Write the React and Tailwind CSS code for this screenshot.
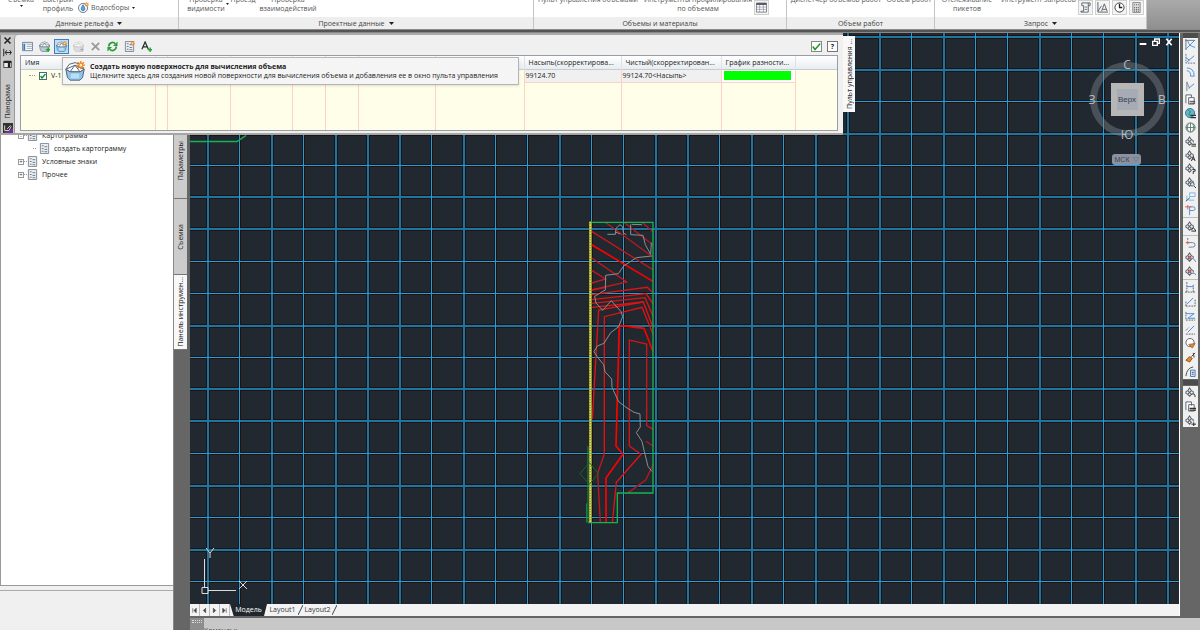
import clsx from "clsx";

// ── Grid ─────────────────────────────────────────────────────────────────────
const V_SHARP = [239, 303, 431, 495, 527, 591, 623, 719, 783, 911, 975, 1007, 1071, 1103];
const V_WIDE = [207, 271, 335, 367, 399, 463, 559, 655, 687, 751, 815, 847, 879, 943, 1039, 1135, 1167];
const H_SHARP = [101, 165, 261, 293, 357, 453, 517, 581];
const H_WIDE = [36, 69, 133, 196, 228, 325, 388, 420, 485, 549];

function Grid() {
  return (
    <g shapeRendering="crispEdges">
      <g fill="#1b1315">
        {V_SHARP.map((x) => <rect key={x} x={x - 1} y="33" width="3" height="571" />)}
        {V_WIDE.map((x) => <rect key={x} x={x - 1} y="33" width="4" height="571" />)}
        {H_SHARP.map((y) => <rect key={y} x="190" y={y - 1} width="990" height="3" />)}
        {H_WIDE.map((y) => <rect key={y} x="190" y={y - 1} width="990" height="4" />)}
      </g>
      <g fill="#1b76a0">
        {V_WIDE.map((x) => <rect key={x} x={x} y="33" width="2" height="571" />)}
        {H_WIDE.map((y) => <rect key={y} x="190" y={y} width="990" height="2" />)}
      </g>
      <g fill="#22a0dc">
        {V_SHARP.map((x) => <rect key={x} x={x} y="33" width="1" height="571" />)}
        {H_SHARP.map((y) => <rect key={y} x="190" y={y} width="990" height="1" />)}
      </g>
    </g>
  );
}

// Terrain surface: red contours, green border, grey ground line
function Surface() {
  return (
    <g transform="translate(560 200) scale(.3333)" fill="none">
      <g stroke="#e31212" strokeWidth="4">
        <path d="M136 67 280 172M192 67 280 136M246 67 280 96" stroke="#b8181d" />
        <path d="M95 94 280 210M95 174 200 246 95 270M95 211 137 237 95 249" stroke="#c8171b" />
        <path d="M95 134 280 245" strokeWidth="5" stroke="#f00" />
        <path d="M95 270 137 262M95 284 262 262 280 280M95 299 258 281 280 312M95 310 255 293 280 350M95 322 250 306 280 385" />
        <path d="M97 657 116 330 248 306M133 762V350L246 322 280 405" />
        <path d="M133 762 113 820 121 968" stroke="#c8171b" />
        <path d="M280 457 252 385 178 376 168 738 189 763 138 834V968" stroke="#f00" strokeWidth="5" />
        <path d="M208 738V420L260 432V677L280 688" stroke="#c8171b" />
        <path d="M208 738 243 763 169 847 157 968" />
        <path d="M258 724 280 739M280 793 257 840 205 878" stroke="#b8181d" />
      </g>
      <path
        d="M142 103H166L168 85 180 74 188 80 190 99 199 104M166 96 181 102M212 73V104L249 106 256 134 272 163 274 128M246 74 215 73M275 168 229 173 191 198 175 221 137 226 136 270 104 289 108 309 128 331 154 302 183 335 188 350 176 380 152 398 132 430 112 438 102 455 113 472 131 494 135 515 155 537 156 562 176 605 198 622 222 637 240 642 241 681 229 698 246 724 253 755 264 799 276 815"
        stroke="#8b8f93"
        strokeWidth="3"
      />
      <path d="M88 67H279V879H172V968H84" stroke="#13b553" strokeWidth="4" />
      <path d="M84 739V968M80 910V968" stroke="#159447" strokeWidth="3" />
      <path d="M91 65V968" stroke="#a8981f" strokeWidth="8" />
      <path d="M91 65V968" stroke="#e9e13a" strokeWidth="4" strokeDasharray="5 3" />
      <path d="M88 788 115 821 88 853 60 821Z" stroke="#1c641f" strokeWidth="3" />
    </g>
  );
}

function ViewCube() {
  return (
    <g fontFamily="'Open Sans', sans-serif" textAnchor="middle">
      <circle cx="1127.500" cy="99.500" r="34" fill="none" stroke="#8d9299" strokeOpacity=".38" strokeWidth="7" />
      <rect x="1111" y="83" width="33" height="33" fill="#b6b6b6" />
      <rect x="1117" y="89" width="21" height="21" fill="#a7acb4" />
      <text x="1127" y="102" fontSize="8" fontFamily="'Liberation Sans', sans-serif" fill="#33404d">Верх</text>
      <g fontSize="12" fill="#b8bbbe">
        <text x="1127" y="69">С</text>
        <text x="1092" y="104">З</text>
        <text x="1162" y="104">В</text>
        <text x="1127" y="139">Ю</text>
      </g>
      <rect x="1112" y="154" width="29" height="11" rx="3" fill="#8c919f" />
      <text x="1122" y="162" fontSize="7" fontFamily="'Liberation Sans', sans-serif" fill="#3e4655">МСК</text>
      <path d="M1133 157.500h6l-3 4z" fill="none" stroke="#737a8b" strokeWidth=".8" />
    </g>
  );
}

function Drawing() {
  return (
    <svg className="block h-full w-full" role="img" aria-label="Модель">
      <g transform="translate(-190 -33)">
        <Grid />
        <path d="M190 141.500H237L246 135.500" fill="none" stroke="#13b553" strokeWidth="1.500" />
        <Surface />
        <ViewCube />
        {/* UCS icon */}
        <g fill="none" stroke="#d9dcdf">
          <path d="M204.500 559V587M208 590.500H236M202 587.500h6v6h-6z" />
          <path d="M206 548l4 5 4-5M210 553v5M239 581l8 8M247 581l-8 8" />
        </g>
      </g>
    </svg>
  );
}

// ── Icons ────────────────────────────────────────────────────────────────────
function Icon({ size = 12, children }) {
  return (
    <svg width={size} height={size} viewBox="0 0 12 12" fill="none" stroke="#555e69" className="block shrink-0">
      {children}
    </svg>
  );
}

const Spark = ({ x = 9.5, y = 2.5 }) => (
  <g>
    <path
      d={`M${x - 2.5} ${y}h5M${x} ${y - 2.5}v5M${x - 1.8} ${y - 1.8}l3.600 3.600M${x + 1.8} ${y - 1.8}l-3.600 3.600`}
      stroke="#ef7d17"
      strokeWidth=".8"
    />
    <circle cx={x} cy={y} r="1.1" fill="#fff3c4" stroke="#ef7d17" strokeWidth=".5" />
  </g>
);

const Basket = ({ gray, blue }) => (
  <g stroke={gray ? "#bdbdbd" : "#55677a"} strokeWidth=".6">
    <path d="M.5 5 2.500 2 6 1 9.500 2 11.500 5 9 6.500H3ZM.5 5 6 2.500 11.500 5M6 2.500 3 6.500M6 2.500 9 6.500" fill="#fff" />
    <path d="M.5 5 1.500 10 3 11.500H9L10.500 10 11.500 5 9 6.500H3Z" fill={gray ? "#ddd" : blue ? "#8cc4ea" : "#b9cad6"} />
    {blue && <path d="M3.500 7.500h5L8.500 10.500h-5z" fill="#b9def5" stroke="none" />}
  </g>
);

const Plus = () => <path d="M10 7v5M7.500 9.500h5" stroke="#22a832" strokeWidth="1.600" />;

const Page = () => (
  <>
    <path d="M1.500 .5h9v11h-9z" fill="#e9edf1" stroke="#7d8791" />
    <path d="M3 3h2M6 4h3M3 6h2M6 7h3M3 9h2M6 9.500h3" stroke="#6a7682" />
  </>
);

const Node = () => (
  <path d="M5 1 7 4 5 6 3 4ZM5 6 7 8 5 10 3 8ZM1 5l2-1M9 5 7 4M1 7l2 1M1 5v2M9 5v2" strokeWidth="1.100" />
);

const PALETTE_TOOLS = [
  ["Вид", <><path d="M.5 1.500h11v9H.5z" fill="#fff" stroke="#6683a5" /><path d="M2.500 3v7" stroke="#4173b0" strokeWidth="2" /><path d="M5 4h6M5 6h6M5 8h6M.5 2h11" stroke="#8796a8" strokeWidth=".8" /></>],
  ["Добавить поверхность", <><Basket /><Plus /></>],
  ["Создать поверхность", <><Basket blue /><Spark /></>],
  ["Добавить область", <><Basket gray /><path d="M10 7v5M7.500 9.500h5" stroke="#aaa" /></>],
  ["Удалить", <path d="M2 2l8 8M10 2l-8 8" stroke="#9b9b9b" strokeWidth="2" />],
  ["Обновить", <><path d="M2 6a4 4 0 0 1 7-3M10 6a4 4 0 0 1-7 3" stroke="#2f9d3c" strokeWidth="2" /><path d="M11.500.5v5h-5zM.5 11.500v-5h5z" fill="#2f9d3c" stroke="none" /></>],
  ["Отчет", <><Page /><Spark x={9.5} y={2.5} /></>],
  ["Текст", <><path d="M1 9 4.500 1 8 9M2.500 6.500h4" stroke="#222b33" strokeWidth="1.300" /><Plus /></>],
];

const SIDE_TOOLS = [
  ["h-[180px]", [
    <><path d="M1 0v12M0 1.500h11" stroke="#68727c" /><path d="M1 11 10 2M3 2q1 6 8 7" stroke="#4a8ed8" /></>,
    <><path d="M1 1v10h10" stroke="#68727c" strokeDasharray="2 1" /><path d="M2 10 10 3M1 5l4 3" stroke="#3d86da" /></>,
    <path d="M2 1q8 0 8 9H6Q7 5 2 4" stroke="#4a8ed8" />,
    <><path d="M2 1v10M2 1l3 7" stroke="#7a838d" /><path d="M4 8 10 3" stroke="#3d86da" /></>,
    <><path d="M1 10V1h6v3M4 4h6v7H4z" fill="#fff" /><path d="M5 8h6M5 10h6" stroke="#333" /></>,
    <><circle cx="5.500" cy="5.500" r="5" fill="#5fb7cf" stroke="#3c6f8d" /><path d="M3 2l3 2-2 3 3 2" stroke="#318445" /><path d="M6 8h6M6 10.500h6" stroke="#333" strokeWidth="1.500" /></>,
    <><circle cx="6" cy="6" r="5" fill="#fff" /><path d="M1 6h10M6 1v10M3.500 2q-2 4 0 8M8.500 2q2 4 0 8" stroke="#56816b" /></>,
    <><Node /><path d="M7 9h5M7 11h5" stroke="#222" /></>,
    <><Node /><path d="M7 12l2-5 2 5M8 10h2" stroke="#222" /></>,
    <><Node /><path d="M8 7h3v2H9v3" stroke="#222" /></>,
    <><Node /><circle cx="8" cy="8" r="2" fill="#cfe5e3" /><path d="M10 10l2 2" stroke="#222" /></>,
    <><path d="M5 6V2h6v4H5M1 11l5-5M2 5v5M4 10h6" stroke="#7fb2e8" /><path d="M1 11 5 8" /></>,
    <><path d="M5 2h4q2 0 2 2t-2 2H5M5 2v9" stroke="#4d8dd2" /><path d="M0 2h7M3 0v5" stroke="#db5b57" /></>,
  ]],
  ["h-[18px]", [<><Node /><path d="M7 10 9 7l3 4H7" stroke="#222" /></>]],
  ["h-[44px]", [
    <><path d="M1 5h7q3 0 3 2.500T8 10H4" stroke="#5d7fab" /><path d="M3 3v4M1 5h4" stroke="#e35b55" /><path d="M3 0v2" /></>,
    <><Node /><path d="M5 8q4-3 7 3" stroke="#5d7fab" /><path d="M3 6h4M5 4v4" stroke="#e35b55" /></>,
    <><Node /><path d="M7 8q4-1 5 2" stroke="#5d7fab" /><path d="M3 6h4M5 4v4" stroke="#e35b55" /></>,
  ]],
  ["h-[99px]", [
    <><path d="M2 0v11M9 3v8" stroke="#555e69" strokeDasharray="2 1" /><path d="M2 5h7" stroke="#3d86da" /><path d="M0 11h12" strokeDasharray="2 1" /></>,
    <><path d="M1 11V5M1 11h10V4" strokeDasharray="2 1" /><path d="M2 9 9 2" stroke="#3d86da" /></>,
    <><path d="M1 2v9h10" strokeDasharray="2 1" /><path d="M1 4h9L3 9h8" stroke="#3d86da" /></>,
    <><path d="M1 11h10M1 7l3-3" strokeDasharray="2 1" /><path d="M3 9 10 2" stroke="#3d86da" /></>,
    <><circle cx="5.500" cy="5" r="4.500" fill="#fff" /><path d="M4 7l7-1-3 5z" fill="#e48a2a" stroke="#8f4f16" strokeWidth=".7" /></>,
    <><path d="M1 9l4-4 3 2-3 4z" fill="#e48a2a" stroke="#8f4f16" /><path d="M7 5l4-4M9 1l1 5" stroke="#333" /></>,
    <><path d="M1 11Q2 2 9 1" stroke="#444" /><path d="M6 4.500h5v7H6z" fill="#cfe2f7" stroke="#4b78ab" /><path d="M7.500 7h2M7.500 9h2" /></>,
  ]],
];

const SIDE_TOOLS_EXTRA = [
  <><Node /><path d="M7 8q4-2 4 3" stroke="#222" /></>,
  <><path d="M1 10V1h6v4M4 4h6v7H4z" fill="#fff" /><path d="M5 8h7M5 10h7" stroke="#333" strokeWidth="1.300" /></>,
  <><Node /><path d="M7 10h5M9.500 8v4" stroke="#222" /></>,
];

// ── Ribbon ───────────────────────────────────────────────────────────────────
function Arrow({ small, className }) {
  return (
    <svg width={small ? 3 : 5} height={small ? 2 : 3} viewBox="0 0 5 3" className={clsx("block shrink-0", className)}>
      <path d="M0 0h5L2.500 3z" fill="#222" />
    </svg>
  );
}

function RibbonGroup({ title, arrow, className, children }) {
  return (
    <section className={clsx("flex shrink-0 flex-col border-r border-[#c4c4c4] bg-white", className)}>
      <div className="flex h-[17px] items-end overflow-hidden pb-1">{children}</div>
      <h2 className="flex h-3 items-center justify-center gap-1 bg-[#eeeeee] text-[#444]">
        {title}
        {arrow && <Arrow />}
      </h2>
    </section>
  );
}

function RibbonButton({ top, bottom, className }) {
  return (
    <button className={clsx("flex h-[18px] shrink-0 flex-col items-center whitespace-nowrap leading-[9px]", className)}>
      <span>{top}</span>
      <span>{bottom}</span>
    </button>
  );
}

function RibbonIcon({ label, children }) {
  return (
    <button aria-label={label} className="-mb-0.5 flex size-[15px] shrink-0 items-center justify-center border border-[#d0d0d0] bg-[#f4f4f4]">
      <Icon size={11}>{children}</Icon>
    </button>
  );
}

function Ribbon() {
  return (
    <header className="flex h-[29px] shrink-0 overflow-hidden bg-gradient-to-b from-[#aaaaaa] to-[#8f8f8f] text-[7px] leading-[9px] text-[#555]">
      <RibbonGroup title="Данные рельефа" arrow className="w-[179px]">
        <RibbonButton top="Съемка" bottom={<Arrow small className="mt-px" />} className="w-[42px]" />
        <RibbonButton top="Быстрый" bottom="профиль" className="w-8" />
        <button className="ml-1 flex h-[11px] items-center gap-0.5 whitespace-nowrap">
          <Icon size={11}>
            <circle cx="5.500" cy="6.500" r="5" fill="#eef4fa" stroke="#66788a" />
            <path d="M5.500 3q4 6 0 6.500-4-.5 0-6.500z" fill="#5ea3df" stroke="#31679f" strokeWidth=".7" />
            <Spark />
          </Icon>
          <span>Водосборы</span>
          <Arrow small className="ml-px" />
        </button>
      </RibbonGroup>
      <RibbonGroup title="Проектные данные" arrow className="w-[355px]">
        <RibbonButton top="Проверка" bottom="видимости" className="ml-2 w-[38px]" />
        <Arrow small className="mb-2 ml-px" />
        <RibbonButton top="Проезд" className="w-7" />
        <RibbonButton top="Проверка" bottom="взаимодействий" className="ml-0.5 w-[58px]" />
      </RibbonGroup>
      <RibbonGroup title="Объемы и материалы" className="w-[253px]">
        <RibbonButton top="Пульт управления объемами" className="w-[108px]" />
        <RibbonButton top="Инструменты профилирования" bottom="по объемам" className="w-[112px]" />
        <RibbonIcon label="Таблица объемов">
          <path d="M.5 1.500h11v9.500H.5z" fill="#fff" strokeWidth=".8" />
          <path d="M.5 2h11" strokeWidth="2.500" />
          <path d="M1 5.500h10M1 8h10M4 3v8M8 3v8" strokeWidth=".5" />
        </RibbonIcon>
      </RibbonGroup>
      <RibbonGroup title="Объем работ" className="w-[148px]">
        <RibbonButton top="Диспетчер объемов работ" className="w-[98px]" />
        <RibbonButton top="Объем работ" className="w-[48px]" />
      </RibbonGroup>
      <RibbonGroup title="Запрос" arrow className="w-[212px]">
        <RibbonButton top="Отслеживание" bottom="пикетов" className="w-[64px]" />
        <RibbonButton top="Инструмент запросов" className="w-[79px]" />
        <div className="flex gap-0.5">
          <RibbonIcon label="Список">
            <path d="M2 1h7v3h2V1H9M4 4v6H1v1h8V4M2 1v3h2M5 5.500h3M5 8h3" fill="#fff" />
          </RibbonIcon>
          <RibbonIcon label="Угол">
            <path d="M1 0v11h11M1 10 5 4M5 10 8 2l3 8M6 8h4" />
          </RibbonIcon>
          <RibbonIcon label="Время">
            <circle cx="6" cy="6" r="5" fill="#fff" stroke="#333" />
            <path d="M6 2v4h3" stroke="#222" strokeWidth="1.400" />
          </RibbonIcon>
          <RibbonIcon label="Калькулятор">
            <path d="M2 .5h8v11H2z" fill="#ddd" stroke="#888" />
            <path d="M3.500 3h5M3.500 6h5M3.500 8h5M3.500 10h5" strokeDasharray="1 1" strokeWidth="1.300" />
          </RibbonIcon>
        </div>
      </RibbonGroup>
    </header>
  );
}

// ── Tool palette on the left ─────────────────────────────────────────────────
function TreeItem({ label, child, sign }) {
  return (
    <li className={clsx("flex h-[13px] items-center", child ? "pl-[32px]" : "pl-[17px]")}>
      {sign && (
        <button aria-label={label} className="flex size-[6px] items-center justify-center border border-[#999] bg-white text-[6px] leading-[6px] text-[#335]">
          {sign}
        </button>
      )}
      <span className="w-[3px] border-t border-dotted border-[#999]" />
      <span className={child ? "ml-[3px]" : ""}><Icon size={11}><Page /></Icon></span>
      <span className={child ? "ml-1" : "ml-[4px]"}>{label}</span>
    </li>
  );
}

function SideTab({ label, active, className }) {
  return (
    <button
      className={clsx(
        "flex w-[13px] shrink-0 items-center justify-center border-b border-[#777]",
        active ? "bg-[#f8f8f8]" : "bg-[#cccccc]",
        className
      )}
    >
      <span className="rotate-180 whitespace-nowrap [writing-mode:vertical-rl]">{label}</span>
    </button>
  );
}

function ToolPalette() {
  return (
    <aside className="flex w-[187px] shrink-0 text-[7px] leading-[9px] text-[#222]">
      <div className="flex flex-1 flex-col border-r border-[#888] bg-[#f0f0f0]">
        <ul className="flex-1 border-b border-l border-[#999] bg-white pt-[96px]">
          <TreeItem label="Картограмма" sign="-" />
          <TreeItem label="создать картограмму" child />
          <TreeItem label="Условные знаки" sign="+" />
          <TreeItem label="Прочее" sign="+" />
        </ul>
        <div className="mt-1 h-10 border-t border-[#aaa]" />
      </div>
      <div className="flex flex-col">
        <SideTab label="Параметры" className="h-[166px] pt-[90px]" />
        <SideTab label="Съемка" className="h-[76px]" />
        <SideTab label="Панель инструмен..." active className="h-[75px]" />
      </div>
    </aside>
  );
}

// ── Volumes dashboard ────────────────────────────────────────────────────────
const COLUMNS = [
  ["w-[134px]", "Имя"],
  ["w-[12px]", ""],
  ["w-[63px]", ""],
  ["w-[62px]", ""],
  ["w-[33px]", ""],
  ["w-[33px]", ""],
  ["w-[77px]", ""],
  ["w-[89px]", ""],
  ["w-[97px]", "Насыпь(скорректирова..."],
  ["w-[100px]", "Чистый(скорректирован..."],
  ["w-[74px]", "График разности..."],
];

function Dashboard() {
  return (
    <div className="absolute top-0 left-0 flex h-[102px] w-[843px] border-y-2 border-t-[#aaaaaa] border-b-[#a5a5a2] bg-[#c9c9c9] text-[7px] leading-[9px] text-[#222]">
      <div className="flex w-[14px] shrink-0 flex-col items-center gap-[3px] border-l border-[#888] pt-px">
        <button aria-label="Закрыть"><Icon size={9}><path d="M2 2l8 8M10 2l-8 8" stroke="#222" strokeWidth="2" /></Icon></button>
        <button aria-label="Скрыть"><Icon size={9}><path d="M1 1v10M3 6h8M5 3 3 6l2 3M9 3l2 3-2 3" stroke="#222" strokeWidth="1.300" /></Icon></button>
        <button aria-label="Свойства"><Icon size={9}><path d="M1 2h10v8H1z" fill="#eee" stroke="#222" /><path d="M1 2.500h10M8 2v8" stroke="#222" strokeWidth="3" /></Icon></button>
        <h2 className="mt-3 rotate-180 whitespace-nowrap [writing-mode:vertical-rl]">Панорама</h2>
        <span className="mt-auto">
          <Icon size={10}><path d="M0 0h12v12H0z" fill="#333" stroke="none" /><path d="M0 12h12V6z" fill="#713393" stroke="none" /><path d="M2 3v6h5l3-5M5 7l4-4" stroke="#eee" /></Icon>
        </span>
      </div>
      <div className="flex min-w-0 flex-1 flex-col rounded-tl border-l border-[#999] bg-[#f0f0f0] px-[5px] pt-[3px]">
        <div className="flex h-[17px] shrink-0 items-center gap-0.5">
          {PALETTE_TOOLS.map(([label, icon], i) => (
            <button
              key={label}
              aria-label={label}
              className={clsx("flex h-[15px] w-[15px] items-center justify-center", i === 2 && "border border-[#3c82bd] bg-[#bfdef5]")}
            >
              <Icon size={11}>{icon}</Icon>
            </button>
          ))}
          <button aria-label="Применить" className="ml-auto flex size-[11px] items-center justify-center border border-[#888] bg-white">
            <Icon size={9}><path d="M1 6l3 4 7-8" stroke="#189a25" strokeWidth="2" /></Icon>
          </button>
          <button aria-label="Справка" className="ml-[3px] size-[11px] border border-[#777] bg-white font-bold">?</button>
        </div>
        <div className="h-[76px] overflow-hidden border border-[#9a9da5] bg-[#ffffe9]">
          <table className="h-full w-full table-fixed border-collapse text-left">
            <thead className="bg-gradient-to-b from-white to-[#e9edf0]">
              <tr className="h-[13px] border-b border-[#c5ccd5]">
                {COLUMNS.map(([width, label], i) => (
                  <th key={i} className={clsx("overflow-hidden border-r border-[#e0e3e6] p-0 pl-1 font-normal whitespace-nowrap", width)}>{label}</th>
                ))}
                <th />
              </tr>
            </thead>
            <tbody className="[&_td]:border-r [&_td]:border-[#ffd0c6] [&_td]:p-0">
              <tr className="h-[13px]">
                <td>
                  <label className="flex items-center gap-1 pl-2">
                    <span className="w-[6px] border-t border-dotted border-[#999]" />
                    <span className="grid size-[8px] place-items-center border border-[#51697a] bg-white">
                      <input type="checkbox" defaultChecked className="peer col-start-1 row-start-1 size-[6px] appearance-none" />
                      <span className="pointer-events-none col-start-1 row-start-1 hidden peer-checked:block">
                        <Icon size={6}><path d="M1 6l3 4 7-8" stroke="#119b1d" strokeWidth="3" /></Icon>
                      </span>
                    </span>
                    V-1
                  </label>
                </td>
                {COLUMNS.slice(1, 8).map((_, i) => <td key={i} />)}
                <td className="border-b border-b-[#a9b4bf] bg-[#f0f0f0]"><span className="pl-px">99124.70</span></td>
                <td className="border-b border-b-[#a9b4bf] bg-[#f0f0f0]"><span className="pl-px">99124.70&lt;Насыпь&gt;</span></td>
                <td className="border-b border-b-[#a9b4bf] bg-white"><div className="mr-1 ml-0.5 h-[9px] bg-[#00ff00]" /></td>
                <td className="!border-r-0" />
              </tr>
              <tr>
                {COLUMNS.map((_, i) => <td key={i} />)}
                <td className="!border-r-0" />
              </tr>
            </tbody>
          </table>
        </div>
      </div>
      <button className="absolute top-px left-full flex h-[76px] w-3 items-center justify-center bg-[#f8f8f8]">
        <span className="rotate-180 whitespace-nowrap [writing-mode:vertical-rl]">Пульт управления ...</span>
      </button>

      <div role="tooltip" className="absolute top-[22px] left-[62px] flex h-[28px] w-[457px] items-center gap-[5px] border border-[#b5b5b5] bg-[#f5f5f6] pl-[2px] shadow">
        <Icon size={20}>
          <Basket blue />
          <Spark />
        </Icon>
        <div className="whitespace-nowrap">
          <p className="font-bold text-[#222]">Создать новую поверхность для вычисления объема</p>
          <p>Щелкните здесь для создания новой поверхности для вычисления объема и добавления ее в окно пульта управления</p>
        </div>
      </div>
    </div>
  );
}

// ── Drawing window ───────────────────────────────────────────────────────────
function Slash() {
  return (
    <svg width="5" height="12" viewBox="0 0 5 12" className="block"><path d="M0 11 5 1" stroke="#444" /></svg>
  );
}

function LayoutTabs() {
  return (
    <nav className="flex h-3 shrink-0 items-stretch bg-[#f3f3f3] text-[7px] leading-3 text-[#333]">
      {["M3 2v8M9 2v8L5 6z", "M8 2v8L4 6z", "M4 2v8l4-4z", "M9 2v8M3 2v8l4-4z"].map((d) => (
        <button key={d} aria-label="Лист" className="flex w-[10px] items-center justify-center border-r border-[#bbb]">
          <Icon size={7}><path d={d} fill="#444" stroke="#444" /></Icon>
        </button>
      ))}
      <button className="w-[37px] bg-[#20262e] text-white [clip-path:polygon(0_0,100%_0,92%_100%,10%_100%)]">Модель</button>
      <button className="w-[31px]">Layout1</button>
      <Slash />
      <button className="w-[29px]">Layout2</button>
      <Slash />
    </nav>
  );
}

function DrawingWindow() {
  return (
    <main className="relative flex min-w-0 flex-1 flex-col border-r border-white bg-[#212830]">
      <div className="min-h-0 flex-1">
        <Drawing />
      </div>
      <div className="absolute top-[5px] right-1.5 flex gap-1">
        <button aria-label="Свернуть"><Icon size={8}><path d="M1 9h10" stroke="#fff" strokeWidth="3" /></Icon></button>
        <button aria-label="Восстановить" className="mx-px"><Icon size={8}><path d="M1 5h7v6H1zM4 5V1.500h7V8H8" stroke="#fff" strokeWidth="2" /></Icon></button>
        <button aria-label="Закрыть окно"><Icon size={8}><path d="M2 1l8 10M10 1 2 11" stroke="#fff" strokeWidth="2.500" /></Icon></button>
      </div>
      <LayoutTabs />
    </main>
  );
}

function SideToolbar() {
  return (
    <aside className="w-[17px] shrink-0 pr-0.5">
      <div className="h-[5px] bg-[#4c4c4c]" />
      <div className="divide-y divide-[#bdbdbd] bg-[#f0f0f0]">
        {SIDE_TOOLS.map(([height, icons]) => (
          <div key={height} className={clsx("flex flex-col items-center justify-around", height)}>
            {icons.map((icon, i) => <button key={i} aria-label="Инструмент"><Icon size={11}>{icon}</Icon></button>)}
          </div>
        ))}
      </div>
      <div className="my-px h-[5px] bg-[#4c4c4c]" />
      <div className="flex h-[41px] flex-col items-center justify-around bg-[#f0f0f0]">
        {SIDE_TOOLS_EXTRA.map((icon, i) => <button key={i} aria-label="Инструмент"><Icon size={11}>{icon}</Icon></button>)}
      </div>
    </aside>
  );
}

export default function App() {
  return (
    <div className="flex h-screen flex-col overflow-hidden bg-[#666666] font-['Open_Sans',sans-serif]">
      <Ribbon />
      <div className="h-1 shrink-0 border-y border-[#8a8a8a] bg-[#555]" />
      <div className="relative flex min-h-0 flex-1">
        <ToolPalette />
        <div className="flex min-w-0 flex-1 flex-col pl-[3px]">
          <div className="flex min-h-0 flex-1 gap-[3px]">
            <DrawingWindow />
            <SideToolbar />
          </div>
          <div className="flex h-[14px] shrink-0 overflow-hidden pt-0.5 text-[7px] leading-[9px] text-[#444]">
            <div className="w-[14px] bg-[#8d8d8d] px-0.5 pt-0.5">
              <div className="h-[3px] border-y border-dotted border-[#ddd]" />
            </div>
            <p className="flex-1 bg-[#c8c8c8] pt-2">Команды:</p>
          </div>
        </div>
        <Dashboard />
      </div>
    </div>
  );
}
